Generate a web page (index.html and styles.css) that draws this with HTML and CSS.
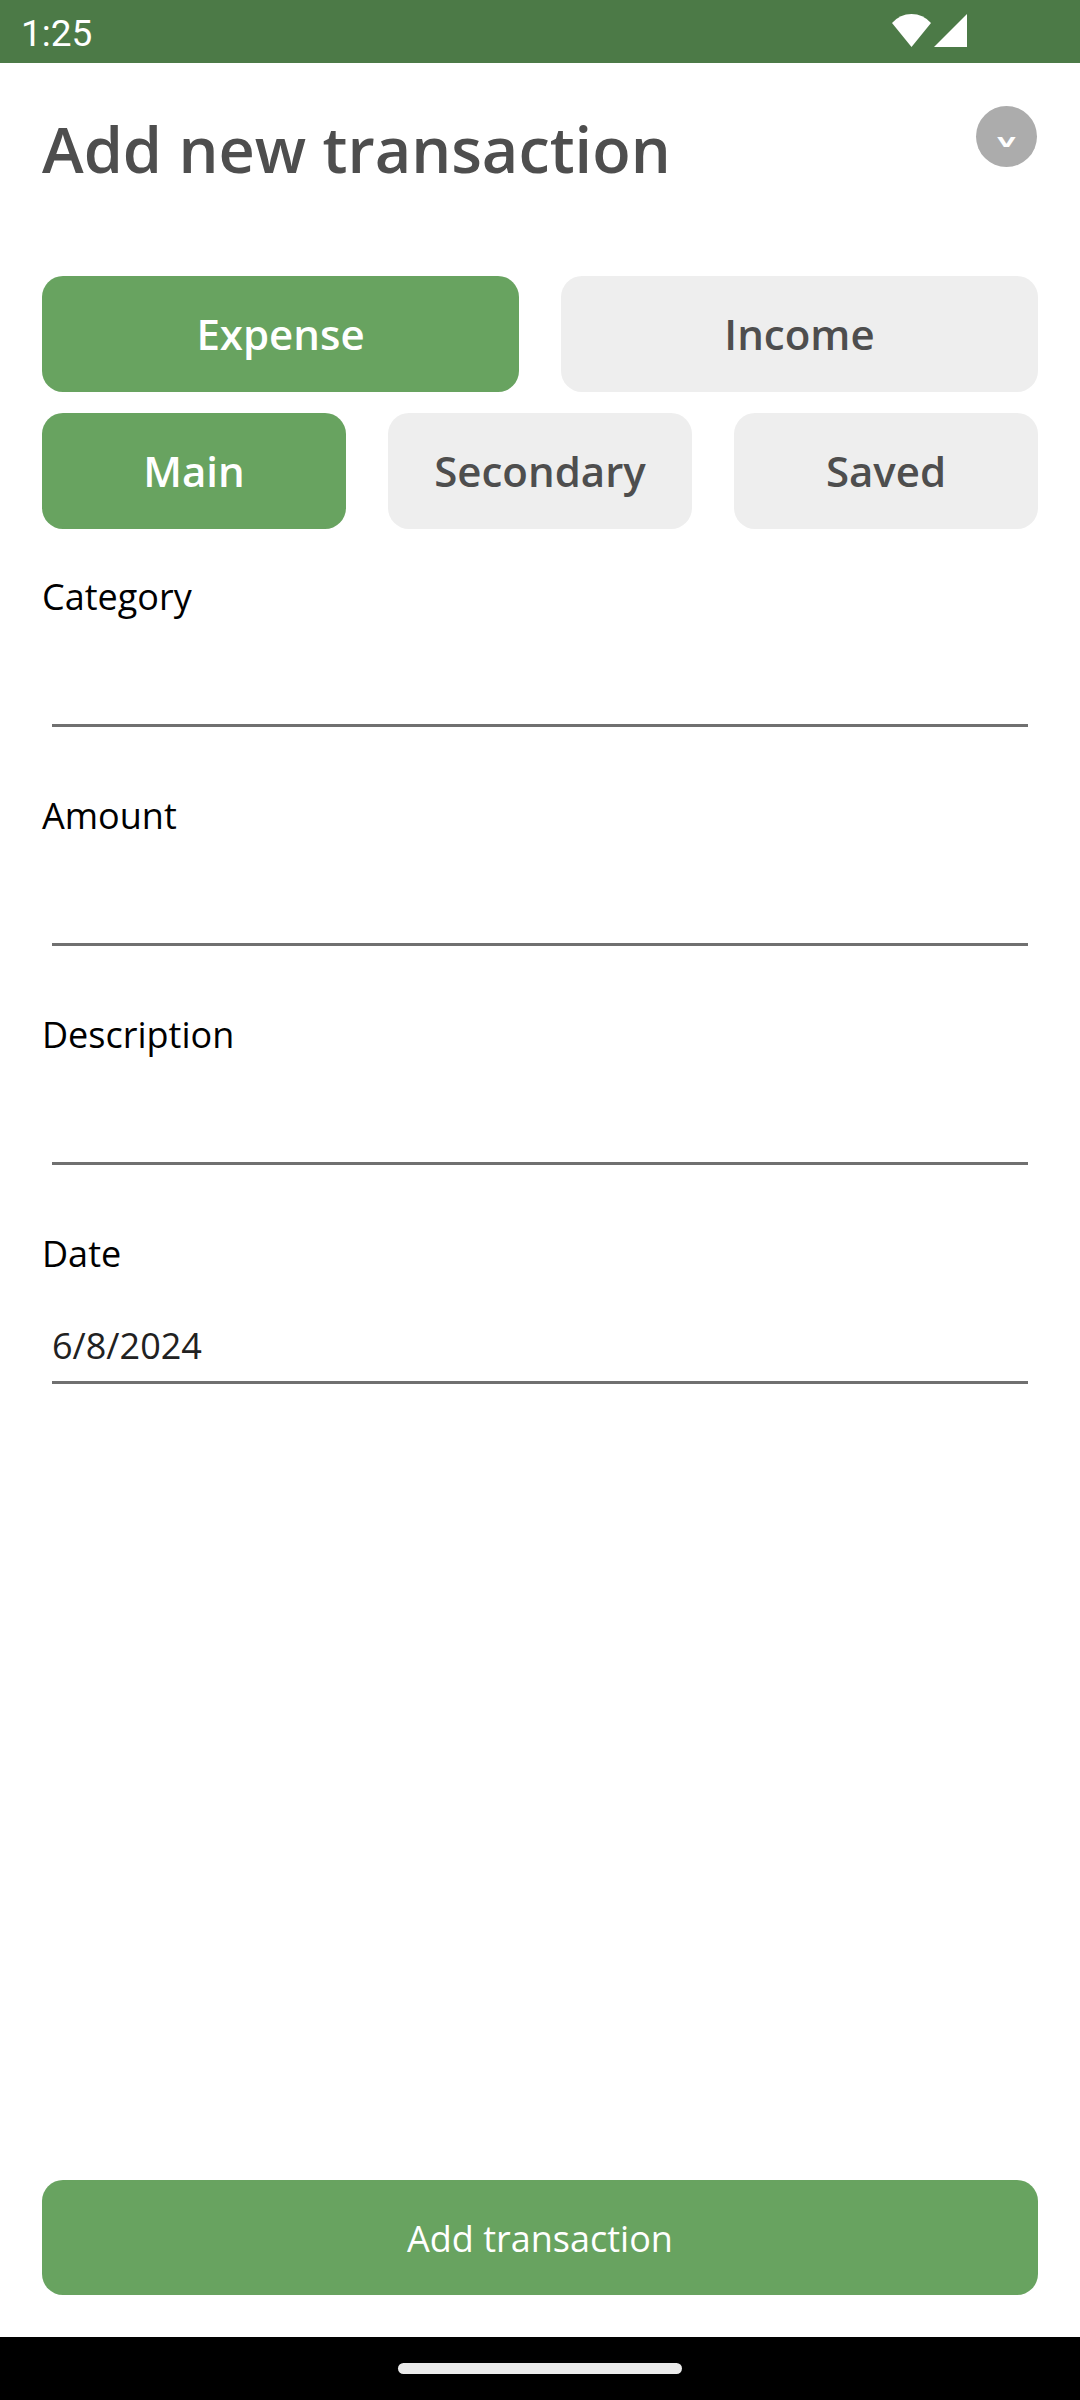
FILE: index.html
```html
<!DOCTYPE html>
<html lang="en">
<head>
<meta charset="utf-8">
<meta name="viewport" content="width=device-width, initial-scale=1">
<title>Add new transaction</title>
<link rel="stylesheet" href="styles.css">
</head>
<body>
<div class="status-bar">
  <span class="status-time">1:25</span>
  <svg class="status-icons" width="76" height="33" viewBox="0 0 76 33" fill="#fff" aria-hidden="true">
    <path d="M0 9Q8 0 19.500 0T39 9L19.500 33Z"/>
    <path d="M75 0V33H42Z"/>
  </svg>
</div>
<form class="screen">
  <header class="header">
    <h1 class="title">Add new transaction</h1>
    <button class="close" type="button" aria-label="Close"><span class="close-glyph">x</span></button>
  </header>
  <div class="options">
    <div class="option-row">
      <button class="option option-selected" type="button" aria-pressed="true">Expense</button>
      <button class="option" type="button" aria-pressed="false">Income</button>
    </div>
    <div class="option-row">
      <button class="option option-selected" type="button" aria-pressed="true">Main</button>
      <button class="option" type="button" aria-pressed="false">Secondary</button>
      <button class="option" type="button" aria-pressed="false">Saved</button>
    </div>
  </div>
  <div class="fields">
    <div class="field">
      <label class="label" for="category">Category</label>
      <input class="input" id="category" type="text">
    </div>
    <div class="field">
      <label class="label" for="amount">Amount</label>
      <input class="input" id="amount" type="text" inputmode="decimal">
    </div>
    <div class="field">
      <label class="label" for="description">Description</label>
      <input class="input" id="description" type="text">
    </div>
    <div class="field">
      <label class="label" for="date">Date</label>
      <input class="input" id="date" type="text" value="6/8/2024">
    </div>
  </div>
  <button class="submit" type="submit">Add transaction</button>
</form>
<div class="nav-bar"><div class="nav-handle"></div></div>
</body>
</html>
```

FILE: styles.css
```css
* {
  box-sizing: border-box;
}

body {
  margin: 0;
  min-height: 100vh;
  display: flex;
  flex-direction: column;
  background: #fff;
  font-family: "Open Sans", sans-serif;
  font-size: 36px;
  line-height: 54px;
  color: #000;
}

button,
input {
  margin: 0;
  padding: 0;
  border: 0;
  font: inherit;
}

.status-bar {
  display: flex;
  align-items: center;
  justify-content: space-between;
  height: 63px;
  padding: 0 112px 0 21px;
  background: #4c7a47;
}

.status-time {
  padding-top: 4px;
  font-family: Roboto, sans-serif;
  font-size: 37px;
  color: #fff;
}

.status-icons {
  display: block;
  margin-bottom: 2px;
}

.screen {
  flex: 1;
  display: flex;
  flex-direction: column;
  padding: 43px 42px 42px;
}

.header {
  display: flex;
  justify-content: space-between;
  align-items: flex-start;
  padding-right: 1px;
}

.title {
  margin: 0;
  font-size: 63px;
  line-height: 86px;
  font-weight: 600;
  color: #4e4e4e;
}

.close {
  width: 61px;
  height: 61px;
  border-radius: 50%;
  background: #acacac;
  color: #fff;
  font-weight: 600;
}

/* The glyph box is shorter than its line and cuts the letter off. */
.close-glyph {
  display: block;
  height: 21px;
  overflow: hidden;
  line-height: 36px;
}

.options {
  display: flex;
  flex-direction: column;
  gap: 21px;
  margin-top: 84px;
}

.option-row {
  display: flex;
  gap: 42px;
}

.option {
  flex: 1 1 0;
  min-width: 0;
  height: 116px;
  border-radius: 21px;
  background: #eee;
  color: #4e4e4e;
  font-size: 42px;
  line-height: 58px;
  font-weight: 600;
}

.option-selected {
  background: #68a360;
  color: #fff;
}

.fields {
  display: flex;
  flex-direction: column;
  gap: 62px;
  margin: 41px 0;
}

.field {
  display: flex;
  flex-direction: column;
}

.input {
  height: 103px;
  margin: 0 10px;
  padding: 37px 0 9px;
  border-bottom: 3px solid #707070;
  background: transparent;
  color: #212121;
  outline: none;
}

.submit {
  height: 115px;
  margin-top: auto;
  padding-top: 2px;
  border-radius: 21px;
  background: #68a360;
  color: #fff;
}

.nav-bar {
  display: flex;
  align-items: center;
  justify-content: center;
  height: 63px;
  background: #000;
}

.nav-handle {
  width: 284px;
  height: 11px;
  border-radius: 6px;
  background: #ebebeb;
}
```
